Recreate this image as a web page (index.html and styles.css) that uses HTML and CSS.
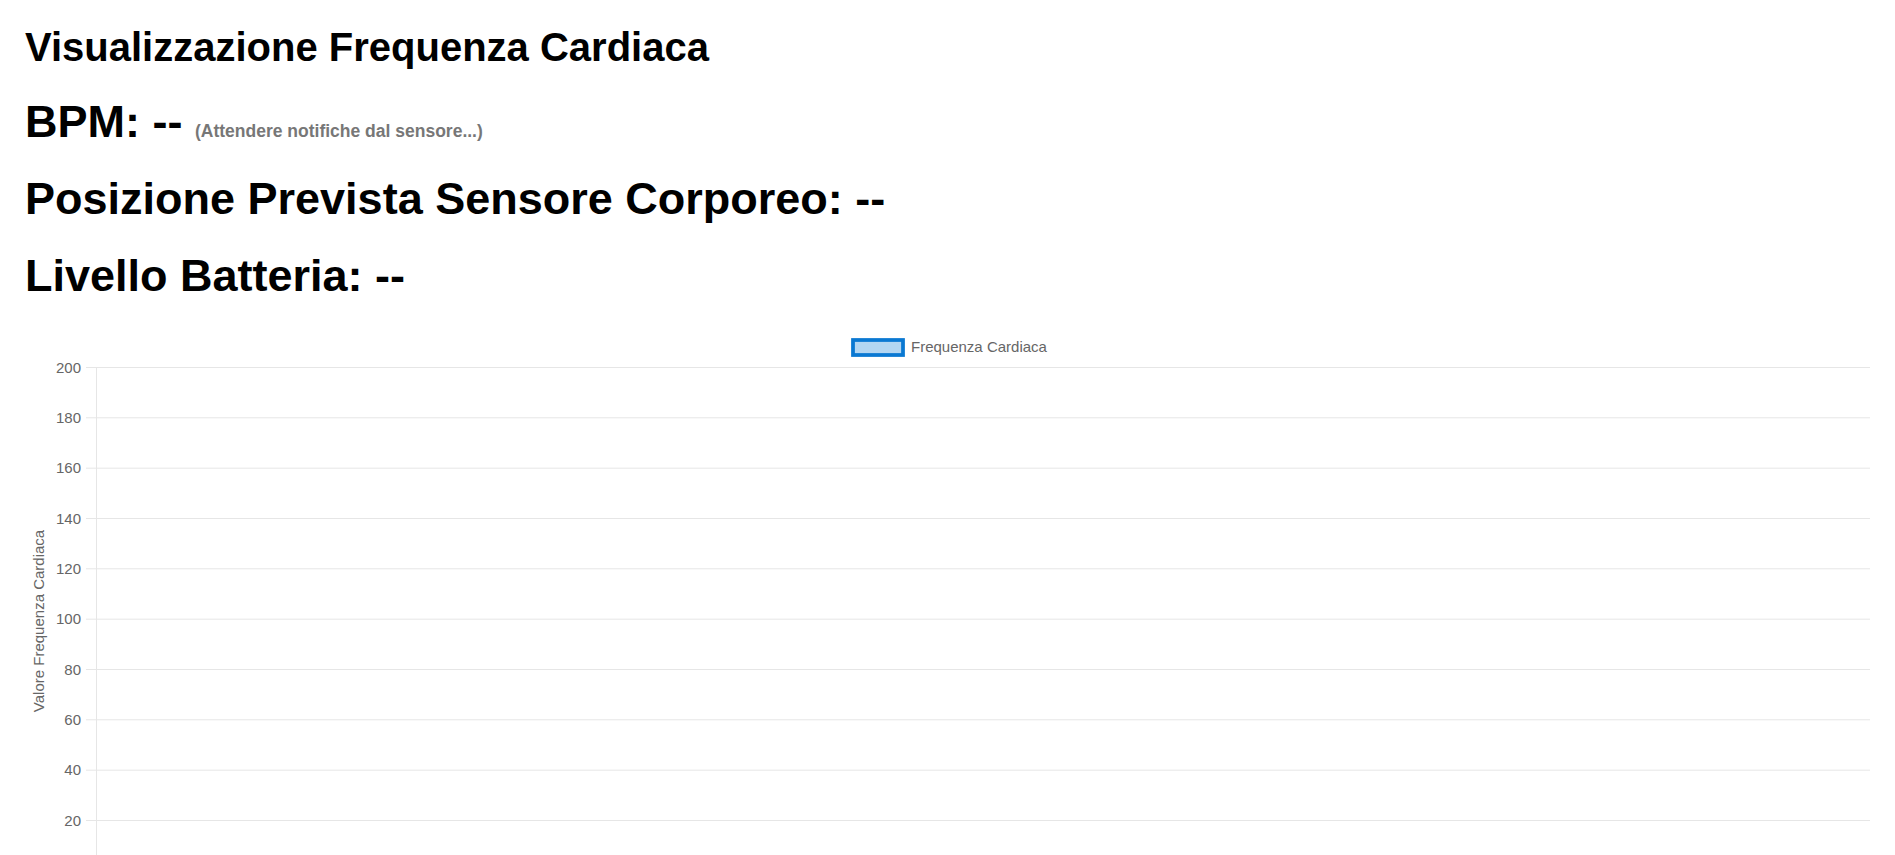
FILE: index.html
```html
<!DOCTYPE html>
<html lang="it">
<head>
<meta charset="utf-8">
<title>Visualizzazione Frequenza Cardiaca</title>
<link rel="stylesheet" href="styles.css">
</head>
<body>
<h1 class="title">Visualizzazione Frequenza Cardiaca</h1>
<div class="stats">
  <h2 class="stat">BPM: -- <span class="hint">(Attendere notifiche dal sensore...)</span></h2>
  <h2 class="stat">Posizione Prevista Sensore Corporeo: --</h2>
  <h2 class="stat">Livello Batteria: --</h2>
</div>
<div class="chart">
  <svg class="chart-svg" width="1845" height="529" viewBox="0 0 1845 529" xmlns="http://www.w3.org/2000/svg">
    <g class="legend">
      <rect x="828" y="14" width="50" height="15" fill="#b3d6f2" stroke="#0a78d2" stroke-width="3.75"/>
      <text x="886" y="26" class="lbl">Frequenza Cardiaca</text>
    </g>
    <g class="grid" stroke="#e6e6e6" stroke-width="1">
      <line x1="61" y1="41.5" x2="1845" y2="41.5"/>
      <line x1="61" y1="91.8" x2="1845" y2="91.8"/>
      <line x1="61" y1="142.2" x2="1845" y2="142.2"/>
      <line x1="61" y1="192.5" x2="1845" y2="192.5"/>
      <line x1="61" y1="242.8" x2="1845" y2="242.8"/>
      <line x1="61" y1="293.2" x2="1845" y2="293.2"/>
      <line x1="61" y1="343.5" x2="1845" y2="343.5"/>
      <line x1="61" y1="393.8" x2="1845" y2="393.8"/>
      <line x1="61" y1="444.2" x2="1845" y2="444.2"/>
      <line x1="61" y1="494.5" x2="1845" y2="494.5"/>
      <line x1="71.5" y1="41" x2="71.5" y2="529"/>
    </g>
    <g class="ticks" text-anchor="end">
      <text x="56" y="46.5" class="lbl">200</text>
      <text x="56" y="96.8" class="lbl">180</text>
      <text x="56" y="147.2" class="lbl">160</text>
      <text x="56" y="197.5" class="lbl">140</text>
      <text x="56" y="247.8" class="lbl">120</text>
      <text x="56" y="298.2" class="lbl">100</text>
      <text x="56" y="348.5" class="lbl">80</text>
      <text x="56" y="398.8" class="lbl">60</text>
      <text x="56" y="449.2" class="lbl">40</text>
      <text x="56" y="499.5" class="lbl">20</text>
    </g>
    <text class="lbl" transform="translate(19,295) rotate(-90)" text-anchor="middle">Valore Frequenza Cardiaca</text>
  </svg>
</div>
</body>
</html>
```
FILE: styles.css
```css
html, body {
  background: #ffffff;
}
body {
  margin: 0;
  padding: 24px 25px 0;
  font-family: "Liberation Sans", Arial, sans-serif;
  color: #000;
}
.title {
  margin: 0 0 26px;
  font-size: 40px;
  line-height: 46px;
  font-weight: bold;
}
.stats {
  display: flex;
  flex-direction: column;
  gap: 25px;
}
.stat {
  margin: 0;
  font-size: 45px;
  line-height: 52px;
  font-weight: bold;
  white-space: nowrap;
}
.hint {
  font-size: 17.5px;
  line-height: 1;
  color: #777777;
  font-weight: bold;
}
.chart {
  margin-top: 24px;
  height: 529px;
}
.chart-svg {
  display: block;
}
.lbl {
  font-family: "Liberation Sans", Arial, sans-serif;
  font-size: 15px;
  fill: #666666;
}
```
